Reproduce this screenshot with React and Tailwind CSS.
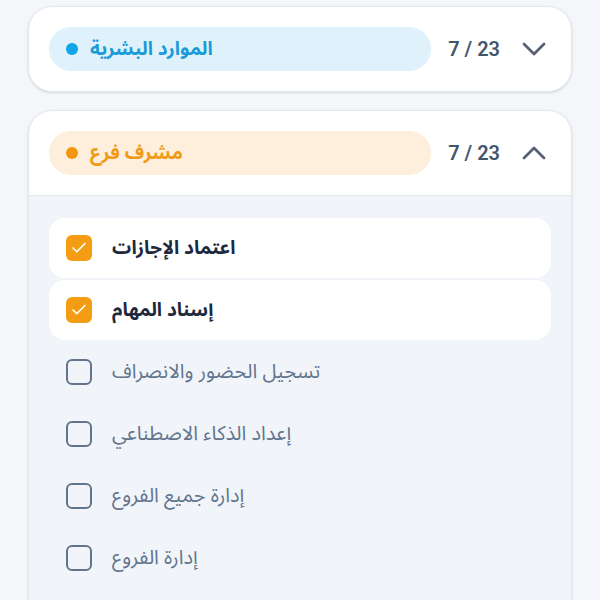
import { Check } from "lucide-react"

const arabic = { fontFamily: '"Noto Sans Arabic", "Noto Sans", "DejaVu Sans", sans-serif' }

const roles = [
  {
    name: "الموارد البشرية",
    open: false,
    pill: "bg-[#dff1fb] text-[#1a9ad8]",
    dot: "bg-[#0ea5e9]",
  },
  {
    name: "مشرف فرع",
    open: true,
    pill: "bg-[#fdefdc] text-[#f09b16]",
    dot: "bg-[#f2960f]",
  },
]

const permissions = [
  { label: "اعتماد الإجازات", checked: true },
  { label: "إسناد المهام", checked: true },
  { label: "تسجيل الحضور والانصراف", checked: false },
  { label: "إعداد الذكاء الاصطناعي", checked: false },
  { label: "إدارة جميع الفروع", checked: false },
  { label: "إدارة الفروع", checked: false },
]

// wide, flat chevron used in the card header
function Chevron({ up }) {
  return (
    <svg width="24" height="14" viewBox="0 0 24 14" className="ml-[22px] text-[#566274]">
      <polyline
        points={up ? "2,12 12,2 22,12" : "2,2 12,12 22,2"}
        fill="none"
        stroke="currentColor"
        strokeWidth="2.8"
        strokeLinecap="round"
        strokeLinejoin="round"
      />
    </svg>
  )
}

function RoleCard({ role }) {
  return (
    <div className="rounded-3xl border border-slate-200 bg-white shadow-sm overflow-hidden">
      <div className="flex items-center pl-5 pr-[25px] py-5">
        <div className={`flex-1 h-11 rounded-full flex items-center gap-3 px-[17px] ${role.pill}`}>
          <span className={`size-3 rounded-full ${role.dot}`} />
          <span className="text-[19px] font-bold leading-none" style={arabic}>
            {role.name}
          </span>
        </div>
        <span className="ml-[17px] text-xl font-semibold text-slate-600 font-['Roboto']">7 / 23</span>
        <Chevron up={role.open} />
      </div>
      {role.open && (
        <div className="border-t border-slate-200 bg-[#f1f4f9] px-5 pt-[22px] pb-10 flex flex-col gap-0.5">
          {permissions.map((p) => (
            <div
              key={p.label}
              className={`h-[60px] flex items-center gap-5 px-[17px] rounded-2xl ${p.checked ? "bg-white" : ""}`}
            >
              {p.checked ? (
                <span className="size-[26px] rounded-md bg-[#f49c12] flex items-center justify-center">
                  <Check className="size-[18px] text-white" strokeWidth={2.2} />
                </span>
              ) : (
                <span className="size-[26px] rounded-md border-2 border-slate-500" />
              )}
              <span
                className={p.checked ? "text-[19px] font-bold text-slate-800" : "text-xl text-slate-500"}
                style={arabic}
              >
                {p.label}
              </span>
            </div>
          ))}
        </div>
      )}
    </div>
  )
}

export default function App() {
  return (
    <div className="min-h-screen bg-[#f4f6f9] px-7 pt-1.5 flex flex-col gap-[18px]">
      {roles.map((r) => (
        <RoleCard key={r.name} role={r} />
      ))}
    </div>
  )
}
